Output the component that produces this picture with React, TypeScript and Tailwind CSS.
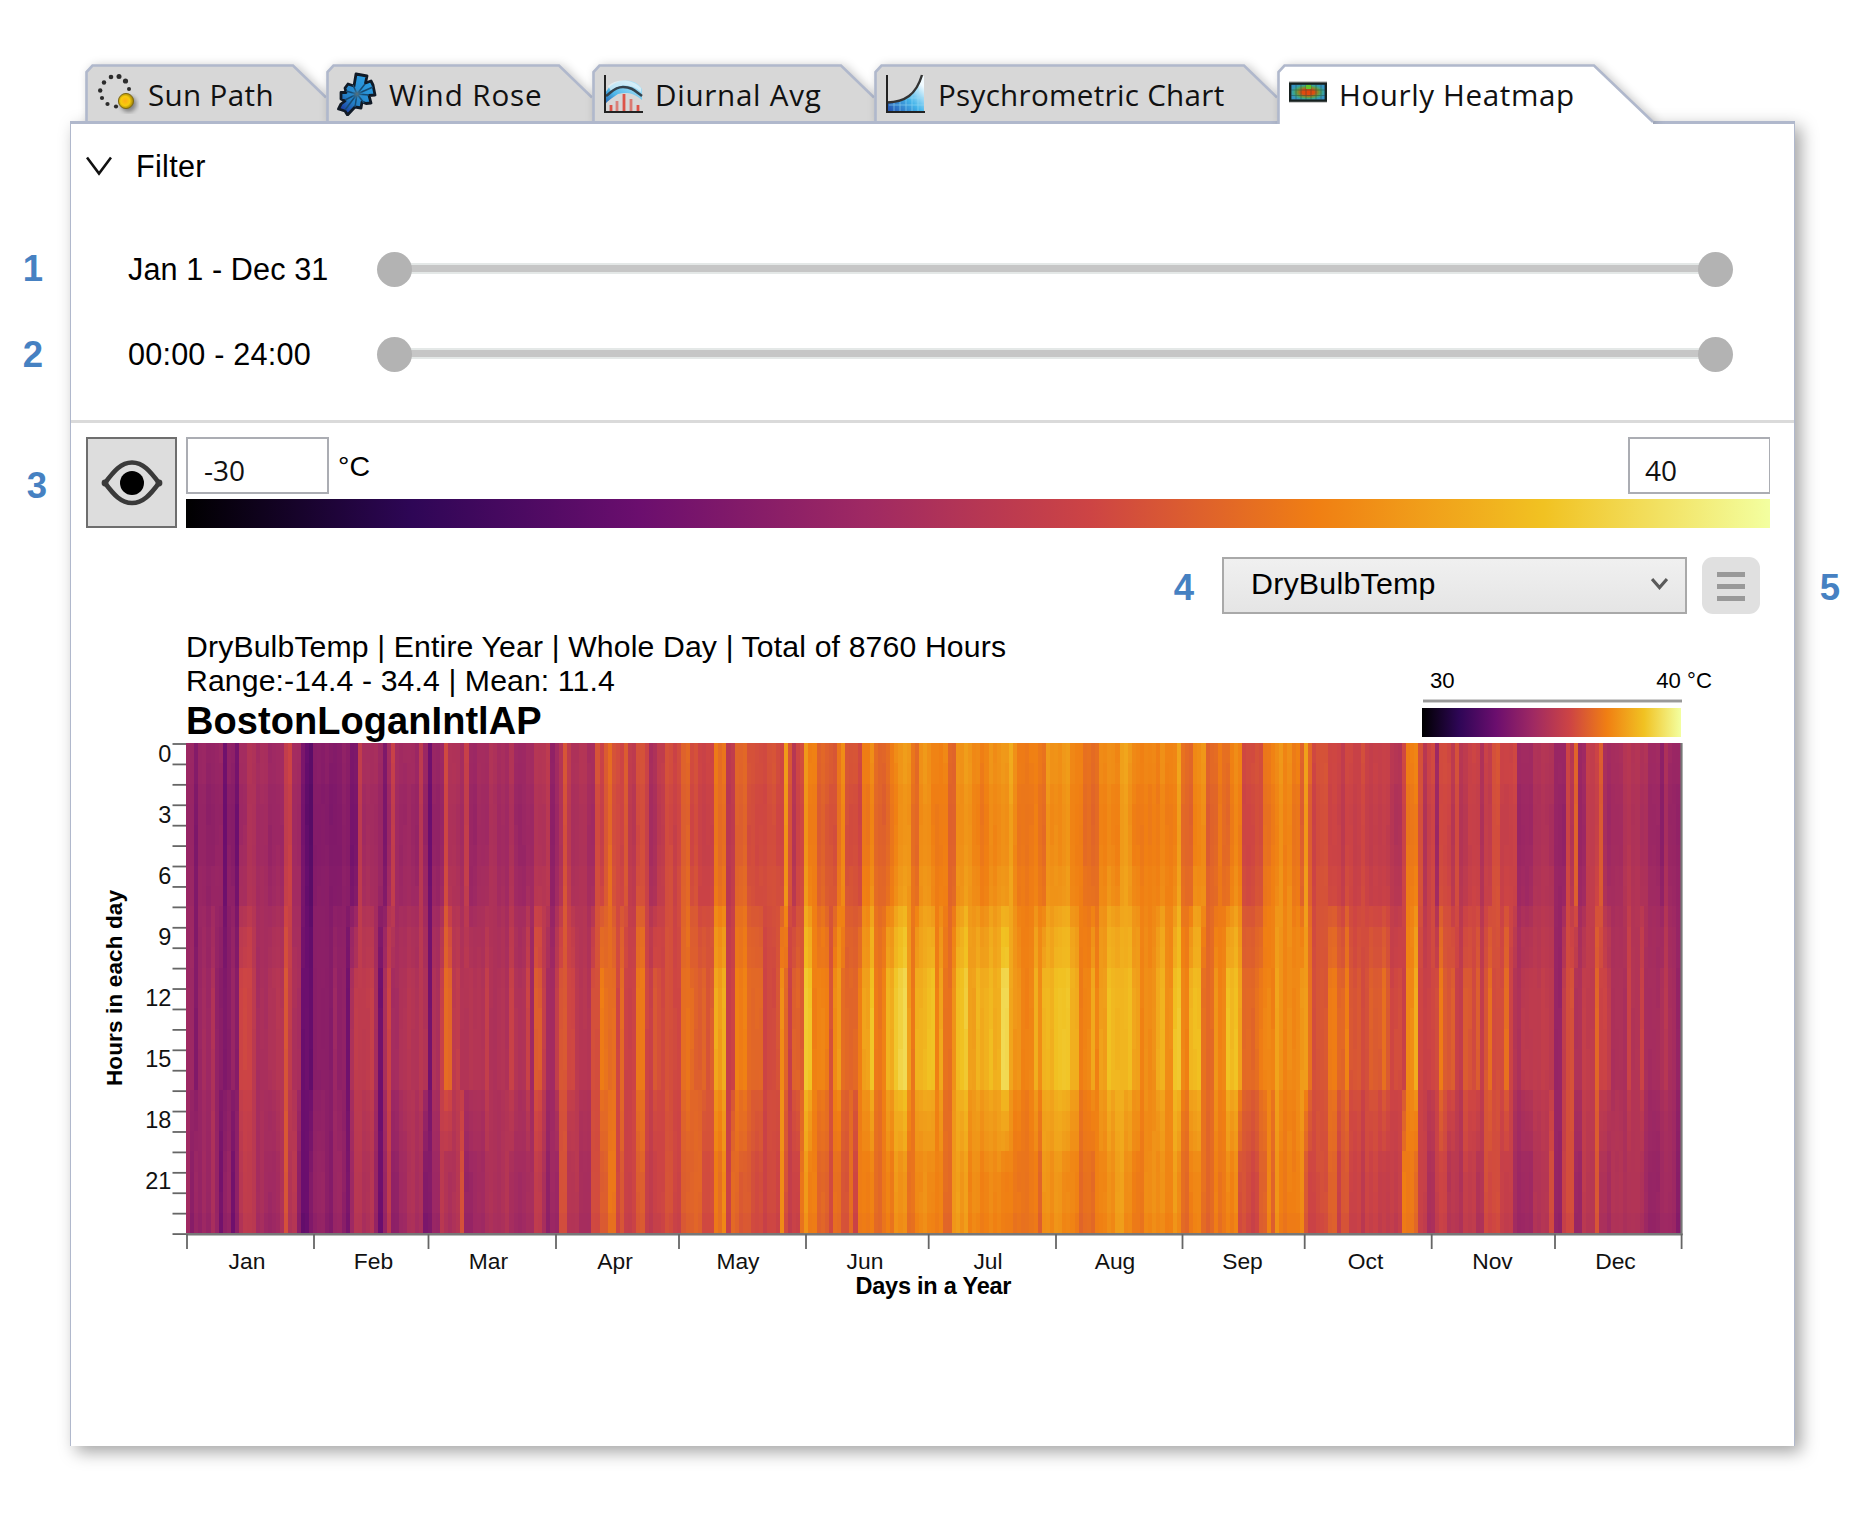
import React from "react";

/* ---------- Colour scale ---------- */
const STOPS: [number, number, number][] = [
  [0, 0, 0],
  [46, 6, 86],
  [107, 14, 110],
  [159, 41, 99],
  [205, 68, 68],
  [240, 127, 19],
  [241, 194, 34],
  [243, 255, 160],
];
const GRADIENT = STOPS.map((c, i) => `rgb(${c.join(",")}) ${((i / 7) * 100).toFixed(2)}%`).join(", ");

function colour(v: number) {
  const t = Math.max(0, Math.min(0.9999, v / 100)) * 7;
  const i = Math.floor(t);
  const f = t - i;
  const a = STOPS[i];
  const b = STOPS[i + 1];
  return `rgb(${a.map((c, k) => Math.round(c + (b[k] - c) * f)).join(",")})`;
}

/* ---------- Temperatures: "day:level" runs for night, midday and evening ---------- */
const NIGHT =
  "0:41 2:35 3:42 4:40 9:30 10:37 12:30 13:43 15:48 17:45 20:43 23:44 24:52 25:57 26:44 28:32 29:26 31:37 33:36 38:38 40:33 42:53 43:46 47:43 48:33 49:42 50:54 51:43 54:45 55:43 57:50 58:42 59:29 60:41 62:42 63:58 64:49 66:46 68:56 69:42 71:45 74:48 76:44 79:47 80:43 85:49 88:51 89:38 90:43 91:48 92:60 93:52 94:46 96:49 98:46 100:61 101:56 102:62 103:66 104:59 107:63 108:54 109:50 110:60 112:55 113:46 115:54 117:59 119:55 120:58 121:65 123:60 125:57 129:68 132:52 134:66 137:61 139:60 145:59 146:77 147:60 148:51 149:58 151:76 152:72 154:64 157:61 159:70 160:74 161:61 164:58 165:70 167:73 168:66 172:72 174:77 177:67 179:75 182:72 186:66 188:74 189:77 192:72 196:75 201:79 202:75 203:71 209:67 210:75 212:76 213:75 214:76 216:73 219:67 223:74 228:78 230:75 231:72 238:73 242:78 243:67 246:73 248:75 249:66 252:71 253:66 255:73 258:58 260:60 263:69 265:73 267:76 268:74 270:70 272:65 273:77 274:66 275:59 276:60 279:57 282:54 283:58 285:56 287:59 288:55 291:54 294:50 297:57 298:71 301:61 302:51 303:57 305:44 306:58 309:50 310:58 311:51 313:56 316:48 317:54 319:60 321:56 325:43 329:48 334:42 337:58 338:50 339:66 340:43 342:55 345:62 346:45 351:50 353:48 357:44 360:37 361:46 362:42 364:39";
const MIDDAY =
  "0:42 1:42 2:35 3:43 6:48 7:38 8:35 11:40 12:36 13:56 16:52 17:46 20:49 23:50 24:60 25:54 26:46 28:28 31:37 36:43 37:39 39:31 40:48 41:53 45:56 46:46 47:31 48:45 49:55 50:44 52:48 54:51 55:49 59:30 60:48 62:55 63:67 65:53 67:50 70:49 73:55 74:48 79:54 80:49 83:55 84:43 85:63 87:54 88:43 90:53 91:61 93:57 95:50 99:61 101:71 102:68 103:66 105:58 106:68 107:56 110:70 112:56 114:61 116:59 119:57 121:68 124:64 126:66 127:62 128:64 129:79 131:82 132:55 134:73 135:72 137:67 141:58 144:62 145:76 146:65 147:54 148:65 150:62 151:87 153:72 157:60 158:74 159:78 160:67 161:66 164:72 165:78 167:85 168:70 170:73 171:82 173:86 174:91 176:78 177:68 178:82 181:85 183:72 184:80 185:68 187:77 188:83 189:87 191:80 192:77 193:82 196:84 197:82 199:90 201:79 202:77 204:73 207:81 208:76 209:82 212:86 216:82 218:72 221:80 222:71 223:79 225:84 228:82 230:84 231:79 233:73 234:74 237:81 239:76 241:86 243:72 245:84 248:67 251:76 252:72 254:85 257:80 258:66 260:67 262:71 263:73 266:79 267:76 268:74 270:73 272:78 273:77 274:70 275:61 279:70 281:66 283:72 284:62 287:59 289:66 290:63 292:66 293:62 294:56 295:60 297:55 298:74 300:80 301:57 305:60 306:70 307:62 310:54 312:62 314:58 315:64 316:54 317:60 318:68 319:59 322:68 323:57 324:48 326:52 329:52 334:41 336:54 337:60 339:49 341:54 344:65 345:55 348:47 352:56 353:48 355:57 356:46 361:50 362:45 364:39";
const EVENING =
  "0:43 1:37 2:42 6:46 7:40 8:30 9:40 11:30 12:38 13:49 14:52 17:46 19:44 23:49 24:60 25:50 27:38 28:27 30:36 31:40 34:37 36:42 38:38 39:33 40:44 41:51 43:48 45:51 46:42 47:30 48:40 49:51 50:38 52:44 54:48 56:46 58:35 60:43 62:52 63:48 65:49 67:62 68:42 70:44 73:48 76:46 78:51 79:45 85:53 87:47 88:38 89:42 91:59 93:49 96:46 99:60 101:63 103:68 105:58 106:64 107:56 110:64 112:54 115:58 117:60 119:56 121:64 123:66 126:60 129:69 131:74 132:56 133:66 135:64 138:60 141:58 145:76 146:60 147:52 148:57 150:68 151:77 152:72 154:65 157:58 158:68 160:61 162:68 163:58 164:71 168:67 170:71 173:76 176:68 178:74 182:73 185:66 187:78 191:73 196:74 199:71 202:70 208:66 209:75 212:77 214:73 218:67 222:71 223:74 227:79 229:73 231:71 234:74 241:78 242:73 243:66 245:73 248:67 251:72 252:69 254:73 257:61 259:58 262:65 264:73 265:66 266:76 267:71 272:76 273:62 274:59 279:64 281:56 282:62 284:57 287:52 288:57 291:54 296:56 297:71 300:66 301:56 303:47 305:56 308:50 310:49 312:54 315:49 317:58 319:59 321:55 324:43 329:49 333:60 334:41 336:57 337:60 339:43 341:52 344:61 345:46 348:49 351:48 356:43 357:42 361:43 364:35";

function expand(src: string) {
  const out = new Array<number>(365).fill(0);
  const runs = src.split(" ").map((p) => p.split(":").map(Number));
  runs.forEach(([start, v], i) => {
    const end = i + 1 < runs.length ? runs[i + 1][0] : 365;
    for (let d = start; d < end; d++) out[d] = v;
  });
  return out;
}

const noise = (n: number) => {
  const s = Math.sin(n * 127.1 + 11.7) * 43758.5453;
  return (s - Math.floor(s)) * 2 - 1;
};

const MIX_DAY = [0, 0, 0, 0, 0, 0.02, 0.06, 0.1, 0.42, 0.65, 0.7, 0.95, 1, 1, 1, 1, 1];
const SHIFT = [0.3, 0.2, -0.7, -1.1, -1.1, -1, -0.3, -0.3, 0, 0, 0, 0, 0, 0, 0, 0, 0];
const MIX_EVENING = [0.45, 0.6, 0.7, 0.92, 1, 1, 1];

function buildCells() {
  const night = expand(NIGHT);
  const mid = expand(MIDDAY);
  const eve = expand(EVENING);
  const cells: { x: number; y: number; w: number; h: number; fill: string }[] = [];
  const cw = 1494.5 / 365;
  const rh = 490 / 24;
  for (let d = 0; d < 365; d++) {
    const x = Math.round(87 + d * cw);
    const w = Math.round(87 + (d + 1) * cw) - x;
    let prev: { x: number; y: number; w: number; h: number; fill: string } | null = null;
    for (let r = 0; r < 24; r++) {
      let v: number;
      if (r < 17) v = night[d] + (mid[d] - night[d]) * MIX_DAY[r] + SHIFT[r];
      else v = mid[d] + (eve[d] - mid[d]) * MIX_EVENING[r - 17] - (r === 23 ? 1 : 0);
      v += noise(d) * 1.5 + noise(d * 31 + Math.floor((r + (d % 3)) / 3)) * 0.7;
      const fill = colour(v);
      const y = Math.round(1 + r * rh);
      const h = Math.round(1 + (r + 1) * rh) - y;
      if (prev && prev.fill === fill) prev.h += h;
      else {
        prev = { x, y, w, h, fill };
        cells.push(prev);
      }
    }
  }
  return cells;
}
const CELLS = buildCells();

/* ---------- Icons ---------- */
const SunPathIcon = () => (
  <svg width="42" height="44" viewBox="0 0 42 44">
    <defs>
      <radialGradient id="sun" cx="45%" cy="50%">
        <stop offset="0" stopColor="#ffae17" />
        <stop offset="0.6" stopColor="#f7cc0d" />
        <stop offset="1" stopColor="#a88a08" />
      </radialGradient>
      <filter id="soft"><feGaussianBlur stdDeviation="2" /></filter>
    </defs>
    {[
      [14, 5, 2.3], [22, 4.5, 2.5], [28.5, 9, 2.6], [32, 17, 2], [7, 10.5, 2.2], [3.2, 18.5, 2.2],
      [5, 26, 2.1], [10.5, 32, 2.1], [19, 34.5, 2.1],
    ].map(([x, y, r]) => (
      <circle key={`${x}`} cx={x} cy={y} r={r} fill="#2c2c2c" />
    ))}
    <circle cx="31.5" cy="32" r="8" fill="#000" opacity="0.4" filter="url(#soft)" />
    <circle cx="29" cy="29" r="7.6" fill="url(#sun)" stroke="#7f6a16" strokeWidth="1" />
  </svg>
);

const WindRoseIcon = () => (
  <svg width="40" height="44" viewBox="0 0 40 44">
    <defs>
      <linearGradient id="rose" x1="0.8" y1="0.2" x2="0.1" y2="1">
        <stop offset="0" stopColor="#2b9be0" />
        <stop offset="0.6" stopColor="#2480c6" />
        <stop offset="1" stopColor="#1b2a9a" />
      </linearGradient>
      <radialGradient id="roseCore">
        <stop offset="0" stopColor="#5c7078" />
        <stop offset="1" stopColor="#2b8fd0" stopOpacity="0" />
      </radialGradient>
    </defs>
    <path
      d="M19 2 L30 4 L28.5 11 L34 9 L36 13 L38 23 L32 23.5 L34 31 L29 31.5 L25 30 L24 36 L18 35 L10.5 43 L8 39 L1.5 37 L4 32 L8 29 L4 27 L4 20.5 L9 20.5 L8 16 L11 12 L17 14 Z"
      fill="url(#rose)" stroke="#111a26" strokeWidth="2.8" strokeLinejoin="round"
    />
    <path
      d="M20 22 L28 12 M20 22 L16 13 M20 22 L32 23 M20 22 L27 31 M20 22 L18 35 M20 22 L8 28 M20 22 L9 19 M20 22 L8 38 M20 22 L36 15"
      stroke="#164a72" strokeWidth="1.5" fill="none"
    />
    <circle cx="20" cy="22" r="6" fill="url(#roseCore)" />
  </svg>
);

const DiurnalIcon = () => (
  <svg width="40" height="40" viewBox="0 0 40 40">
    <defs>
      <linearGradient id="arc" x1="0" y1="1" x2="1" y2="0">
        <stop offset="0" stopColor="#1f5fb0" />
        <stop offset="0.35" stopColor="#4fb8ea" />
        <stop offset="1" stopColor="#c9ecf8" />
      </linearGradient>
    </defs>
    <path d="M2 20 C8 4 32 2 39 15 L39 26 C30 18 22 18 15 20 C10 23 5 27 2 30 Z" fill="url(#arc)" />
    <path d="M5 12 C14 4 30 5 38 14 L38 18 C28 9 16 10 8 17 Z" fill="#e8f5fa" opacity="0.7" />
    <path d="M3 22 C8 19 11 13 20 13 C29 13 32 17 39 22" fill="none" stroke="#34424c" strokeWidth="2.6" />
    <g stroke="#dd5348" strokeWidth="2.8">
      <path d="M8 37V31" />
      <path d="M14 37V27" opacity="0.65" />
      <path d="M21 37V20" />
      <path d="M28 37V25" opacity="0.7" />
      <path d="M35 37V31" />
    </g>
    <path d="M2 1V38H40" fill="none" stroke="#222" strokeWidth="2" />
  </svg>
);

const PsychroIcon = () => (
  <svg width="40" height="40" viewBox="0 0 40 40">
    <defs>
      <linearGradient id="psy" x1="0" y1="1" x2="1" y2="0">
        <stop offset="0" stopColor="#2250b0" />
        <stop offset="0.45" stopColor="#43b4ea" />
        <stop offset="0.85" stopColor="#f2fbff" />
      </linearGradient>
    </defs>
    <path d="M3 28 C20 27 31 20 36 2 H39 V37 H3 Z" fill="url(#psy)" />
    <path d="M9 28V37M15 26V37M21 24V37M27 19V37M33 12V37M4 31H39M20 24H39" stroke="#9bdcf5" strokeWidth="0.8" opacity="0.7" />
    <path d="M2 28.5 C20 28 31 21 37 1" fill="none" stroke="#333" strokeWidth="2.4" />
    <path d="M2 1V38H40" fill="none" stroke="#222" strokeWidth="2" />
  </svg>
);

const HeatmapIcon = () => (
  <svg width="38" height="26" viewBox="0 0 38 26">
    <defs>
      <radialGradient id="heat">
        <stop offset="0" stopColor="#e8430a" />
        <stop offset="0.35" stopColor="#dd4d10" />
        <stop offset="0.62" stopColor="#6f9a3c" />
        <stop offset="0.8" stopColor="#3aa78f" />
        <stop offset="1" stopColor="#3593c4" />
      </radialGradient>
    </defs>
    <rect x="0" y="0" width="38" height="22" fill="#999" opacity="0.5" />
    <rect x="1.2" y="2.6" width="35.6" height="17" fill="url(#heat)" stroke="#17211f" strokeWidth="2.4" />
    <path d="M7 4V19M12 4V19M17 4V19M22 4V19M27 4V19M32 4V19M2 9H36M2 14.5H36" stroke="#23443c" strokeWidth="0.8" opacity="0.55" />
    <rect x="17" y="4" width="5" height="4" fill="#63c52c" />
  </svg>
);

const EyeIcon = () => (
  <svg width="62" height="48" viewBox="0 0 62 48" fill="none">
    <path d="M4 24 C13 12 20 3.5 31 3.5 C42 3.5 49 12 58 24 C49 36 42 44 31 44 C20 44 13 36 4 24 Z" stroke="#3a3a3a" strokeWidth="4.6" />
    <circle cx="4" cy="24" r="3.4" fill="#3a3a3a" />
    <circle cx="58" cy="24" r="3.4" fill="#3a3a3a" />
    <circle cx="31" cy="24" r="12" fill="#000" />
  </svg>
);

/* ---------- Tabs ---------- */
type TabProps = { width: number; label: string; icon: React.ReactNode; pad: string; text: string; active?: boolean };

function Tab({ width, label, icon, pad, text, active }: TabProps) {
  const flat = active ? 317 : width - 33;
  const shape = active
    ? `M1.5 60 V8 L7.5 1.5 H${flat} L376 58`
    : `M1.5 60 V8 L7.5 1.5 H${flat} L${width} 33.5`;
  const fill = active ? `${shape} V61 H1.5 Z` : `${shape} V60 Z`;
  return (
    <div
      className={`relative flex h-[57px] shrink-0 items-center ${active ? "z-10" : ""} ${pad}`}
      style={{ width }}
    >
      <svg
        className="absolute top-0 left-0 overflow-visible [filter:drop-shadow(3px_1px_5px_rgba(0,0,0,0.22))]"
        width={width}
        height="57"
        style={{ clipPath: "inset(-20px -30px 0 -20px)", height: active ? 60 : 57 }}
      >
        <path d={fill} fill={active ? "#fff" : "#d7d7d7"} />
        <path d={shape} fill="none" stroke="#b0b8cc" strokeWidth="2.6" />
      </svg>
      <div className="relative top-px flex w-[42px] shrink-0 items-center">{icon}</div>
      <span className={`relative whitespace-nowrap pt-[5px] font-['Open_Sans',sans-serif] text-[29.6px] leading-[40px] text-[#111] ${text}`}>
        {label}
      </span>
    </div>
  );
}

function RangeSlider() {
  return (
    <div className="relative flex h-[35px] w-[1356px] items-center justify-between">
      <div className="absolute inset-x-4 top-[11px] h-[11px] border-y-2 border-[#e4e8e7] bg-[#c6c6c6]" />
      <div className="relative size-[35px] rounded-full bg-[#b3b3b3]" />
      <div className="relative size-[35px] rounded-full bg-[#b3b3b3]" />
    </div>
  );
}

const Callout = ({ n, at }: { n: number; at: string }) => (
  <span className={`absolute w-[30px] text-center text-[36.5px] leading-[40px] font-bold text-[#4681c2] ${at}`}>{n}</span>
);

const MONTHS: [string, number, number][] = [
  ["Jan", 88, 148], ["Feb", 215, 274.5], ["Mar", 329.5, 389.5], ["Apr", 457, 516], ["May", 580, 639], ["Jun", 707, 766],
  ["Jul", 829.7, 889], ["Aug", 957, 1016], ["Sep", 1083.5, 1143.5], ["Oct", 1205.7, 1266.5], ["Nov", 1332.7, 1393.5], ["Dec", 1456, 1516.5],
];

function HeatmapChart() {
  return (
    <svg className="ml-[28px] block" width="1600" height="560" viewBox="0 0 1600 560">
      <g shapeRendering="crispEdges">
        {CELLS.map((c, i) => (
          <rect key={i} x={c.x} y={c.y} width={c.w} height={c.h} fill={c.fill} />
        ))}
      </g>
      <path d="M1582.5 1V493" stroke="#777" strokeWidth="2.2" />
      <path d="M87 492.3H1583.5" stroke="#777" strokeWidth="2.6" />
      <g stroke="#666" strokeWidth="1.8">
        {Array.from({ length: 25 }, (_, i) => (
          <path key={i} d={`M73.5 ${2 + i * 20.42}H87`} />
        ))}
        {[...MONTHS.map((m) => m[1]), 1582.6].map((x) => (
          <path key={x} d={`M${x} 492V507`} />
        ))}
      </g>
      <g fill="#111" fontSize="23.5" textAnchor="end">
        {[0, 3, 6, 9, 12, 15, 18, 21].map((h) => (
          <text key={h} x="72.3" y={19.7 + h * 20.36}>{h}</text>
        ))}
      </g>
      <g fill="#111" fontSize="22.8" textAnchor="middle">
        {MONTHS.map(([name, , x]) => (
          <text key={name} x={x} y="527">{name}</text>
        ))}
      </g>
      <text x="834.5" y="551.5" textAnchor="middle" fontSize="23.5" fontWeight="700" textLength="156">Days in a Year</text>
      <text transform="translate(23 344) rotate(-90)" fontSize="22.5" fontWeight="700" textLength="196">Hours in each day</text>
    </svg>
  );
}

export default function App() {
  return (
    <div className="relative h-[1516px] w-[1860px] overflow-hidden bg-white pt-[64px] pl-[70px] font-['Liberation_Sans',Arial,sans-serif] text-black">
      <Callout n={1} at="left-[18px] top-[249px]" />
      <Callout n={2} at="left-[18px] top-[335px]" />
      <Callout n={3} at="left-[22px] top-[466px]" />
      <Callout n={4} at="left-[1169px] top-[568px] z-20" />
      <Callout n={5} at="left-[1815px] top-[568px]" />

      <div className="relative flex pl-[15px]">
        <Tab width={241} label="Sun Path" icon={<SunPathIcon />} pad="pl-[12px]" text="ml-[9px] tracking-[0.35px]" />
        <Tab width={266} label="Wind Rose" icon={<WindRoseIcon />} pad="pl-[11px]" text="ml-[10px] tracking-[0.9px]" />
        <Tab width={282} label="Diurnal Avg" icon={<DiurnalIcon />} pad="pl-[11px]" text="ml-[10px] tracking-[0.72px]" />
        <Tab width={403} label="Psychrometric Chart" icon={<PsychroIcon />} pad="pl-[11px]" text="ml-[11px] tracking-[0.3px]" />
        <Tab width={377} label="Hourly Heatmap" icon={<HeatmapIcon />} pad="pl-[12px]" text="ml-[8px] tracking-[0.6px]" active />
      </div>

      <main className="h-[1325px] w-[1725px] border-x border-t-[3px] border-[#b0b8cc] bg-white shadow-[6px_6px_16px_rgba(0,0,0,0.36)]">
        <div className="mt-[24px] ml-[15px] flex h-[36px] items-center">
          <svg width="26" height="20" viewBox="0 0 26 20" fill="none">
            <path d="M1 1.5L13 17.5L25 1.5" stroke="#111" strokeWidth="2.6" />
          </svg>
          <span className="ml-[24px] text-[30.6px] leading-[36px] tracking-[0.3px]">Filter</span>
        </div>
        <div className="mt-[67px] ml-[57px] flex h-[36px] items-center text-[30.6px] leading-[36px]">
          <span className="w-[249px] whitespace-nowrap tracking-[0.1px]">Jan 1 - Dec 31</span>
          <RangeSlider />
        </div>
        <div className="mt-[49px] ml-[57px] flex h-[36px] items-center text-[30.6px] leading-[36px]">
          <span className="w-[249px] whitespace-nowrap tracking-[0.2px]">00:00 - 24:00</span>
          <RangeSlider />
        </div>
        <div className="mt-[48px] h-[3px] bg-[#dadada]" />

        <div className="mt-[14px] ml-[15px] flex">
          <button className="flex size-[91px] items-center justify-center border-[2.6px] border-[#6e6e6e] bg-[#ddd]">
            <EyeIcon />
          </button>
          <div className="ml-[9px] w-[1584px]">
            <div className="flex h-[57px] font-['Open_Sans',sans-serif] text-[28px]">
              <div className="w-[143px] border-[2.6px] border-[#abadb3] pt-[11px] pl-[16px] leading-[40px] text-[#111]">-30</div>
              <span className="ml-[9px] pt-[11px] font-['Liberation_Sans',Arial,sans-serif] text-[28.5px] leading-[36px]">°C</span>
              <div className="ml-auto w-[142px] border-[2.6px] border-r border-[#abadb3] pt-[11px] pl-[15px] leading-[40px] text-[#111]">40</div>
            </div>
            <div className="mt-[5px] h-[29px]" style={{ background: `linear-gradient(to right, ${GRADIENT})` }} />
          </div>
        </div>

        <div className="mt-[29px] mr-[34px] flex h-[57px] justify-end">
          <div className="flex w-[465px] justify-between border-[2.6px] border-[#a9a9a9] bg-gradient-to-b from-[#f0f0f0] to-[#e5e5e5] pr-[17px] pl-[27px]">
            <span className="pt-[6px] text-[30.4px] leading-[36px] tracking-[0.2px]">DryBulbTemp</span>
            <svg className="mt-[18px]" width="17" height="14" viewBox="0 0 17 14" fill="none">
              <path d="M1 2L8.5 10.5L16 2" stroke="#5a5a5a" strokeWidth="3.2" />
            </svg>
          </div>
          <button className="ml-[15px] flex w-[58px] flex-col items-center justify-center gap-[7px] rounded-[11px] bg-[#e0e0e0] pt-[2px]">
            <span className="h-[5px] w-[28px] bg-[#999]" />
            <span className="h-[5px] w-[28px] bg-[#999]" />
            <span className="h-[5px] w-[28px] bg-[#999]" />
          </button>
        </div>

        <div className="mt-[16px] flex h-[112px] justify-between pl-[115px]">
          <div className="whitespace-nowrap text-[30.2px] leading-[34px]">
            <p className="tracking-[0.145px]">DryBulbTemp | Entire Year | Whole Day | Total of 8760 Hours</p>
            <p className="tracking-[0.12px]">Range:-14.4 - 34.4 | Mean: 11.4</p>
            <h1 className="mt-[2px] text-[38px] leading-[42px] font-bold tracking-[0.06px]">BostonLoganIntlAP</h1>
          </div>
          <div className="mr-[80px] w-[292px] pt-[37px]">
            <div className="flex justify-between pr-[2px] pl-[8px] text-[22.2px] leading-[28px] whitespace-nowrap">
              <span>30</span>
              <span>40 °C</span>
            </div>
            <div className="mt-[4px] ml-px h-[4px] w-[259px] border-y border-[#d0d0d0] bg-[#999]" />
            <div className="mt-[5px] h-[29px] w-[259px]" style={{ background: `linear-gradient(to right, ${GRADIENT})` }} />
          </div>
        </div>
        <HeatmapChart />
      </main>
    </div>
  );
}
